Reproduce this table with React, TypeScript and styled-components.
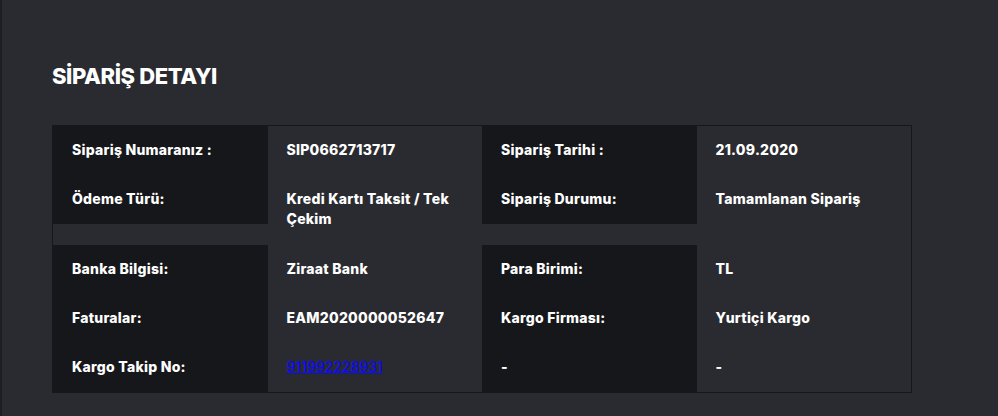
import React from 'react'
import styled, { createGlobalStyle } from 'styled-components'

type Row = {
  label: string
  value: string
  label2: string
  value2: string
  link?: boolean
}

const groups: Row[][] = [
  [
    {
      label: 'Sipariş Numaranız :',
      value: 'SIP0662713717',
      label2: 'Sipariş Tarihi :',
      value2: '21.09.2020',
    },
    {
      label: 'Ödeme Türü:',
      value: 'Kredi Kartı Taksit / Tek Çekim',
      label2: 'Sipariş Durumu:',
      value2: 'Tamamlanan Sipariş',
    },
  ],
  [
    {
      label: 'Banka Bilgisi:',
      value: 'Ziraat Bank',
      label2: 'Para Birimi:',
      value2: 'TL',
    },
    {
      label: 'Faturalar:',
      value: 'EAM2020000052647',
      label2: 'Kargo Firması:',
      value2: 'Yurtiçi Kargo',
    },
    {
      label: 'Kargo Takip No:',
      value: '911992228931',
      label2: '-',
      value2: '-',
      link: true,
    },
  ],
]

const GlobalStyle = createGlobalStyle`
  html, body {
    margin: 0;
    padding: 0;
    background: #2a2b30;
  }
  body {
    font-family: Inter, 'Noto Sans', sans-serif;
    color: #fff;
  }
`

const Page = styled.div`
  min-height: 416px;
  box-sizing: border-box;
  border-left: 2px solid #1d1e22;
  padding: 61px 0 0 50px;
`

const Title = styled.h1`
  margin: 0 0 34px;
  font-size: 22px;
  line-height: 30px;
  font-weight: 800;
  letter-spacing: -0.4px;
`

const Table = styled.div`
  width: 860px;
  box-sizing: border-box;
  border: 1px solid #16171b;
  display: flex;
  flex-direction: column;
  gap: 21px;
`

const Group = styled.div`
  display: grid;
  grid-template-columns: repeat(4, 1fr);
  grid-auto-rows: 49px;
`

const Cell = styled.div<{ $label?: boolean }>`
  background: ${p => (p.$label ? '#16171b' : 'transparent')};
  padding: 14px 16px 0 19px;
  font-size: 14px;
  line-height: 20px;
  font-weight: 800;
  letter-spacing: 0.25px;
  overflow: visible;
  min-width: 0;
`

const Link = styled.a`
  color: #0a0aff;
  text-decoration: underline;
  text-decoration-thickness: 1px;
  text-underline-offset: 1px;
  font-weight: 500;
  letter-spacing: 0;
`

export default function App() {
  return (
    <>
      <GlobalStyle />
      <Page>
        <Title>SİPARİŞ DETAYI</Title>
        <Table>
          {groups.map((rows, gi) => (
            <Group key={gi}>
              {rows.map(r => (
                <React.Fragment key={r.label}>
                  <Cell $label>{r.label}</Cell>
                  <Cell>{r.link ? <Link href="#">{r.value}</Link> : r.value}</Cell>
                  <Cell $label>{r.label2}</Cell>
                  <Cell>{r.value2}</Cell>
                </React.Fragment>
              ))}
            </Group>
          ))}
        </Table>
      </Page>
    </>
  )
}
